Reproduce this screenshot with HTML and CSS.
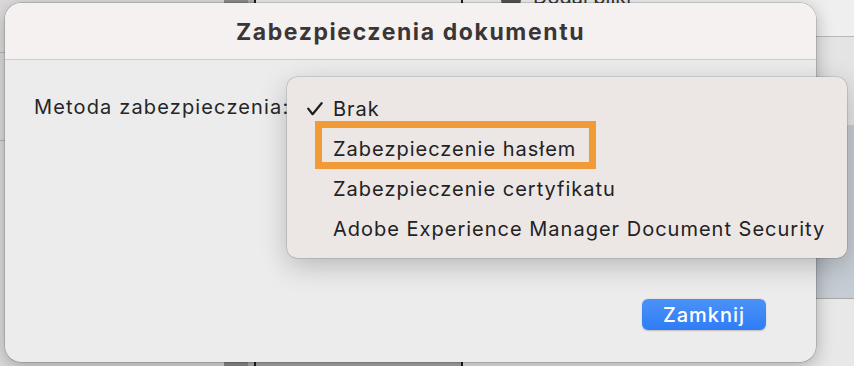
FILE: index.html
```html
<!DOCTYPE html>
<html lang="pl">
<head>
<meta charset="utf-8">
<title>Zabezpieczenia dokumentu</title>
<link rel="stylesheet" href="styles.css">
</head>
<body>
<div class="desk">
  <div class="col c-side"></div>
  <div class="col c-bar"></div>
  <div class="col c-gap"></div>
  <div class="col c-line"></div>
  <div class="col c-mid"></div>
  <div class="col c-line"></div>
  <div class="col c-right">
    <div class="r-top"><span class="add-ico"></span><span class="add-txt">Dodaj pliki</span></div>
    <div class="r-a"></div>
    <div class="r-b"></div>
    <div class="r-c"></div>
  </div>
</div>

<div class="dialog">
  <div class="titlebar">Zabezpieczenia dokumentu</div>
  <div class="body">
    <div class="row">
      <span class="label">Metoda zabezpieczenia:</span>
    </div>
    <div class="actions">
      <button class="btn">Zamknij</button>
    </div>
  </div>

  <div class="menu">
    <div class="item checked">
      <svg class="check" width="16" height="14" viewBox="0 0 16 14"><path d="M1.2 6.6 L5.6 12.2 L14.6 1.2" fill="none" stroke="#1e1e1e" stroke-width="2.2" stroke-linecap="round" stroke-linejoin="round"/></svg>
      <span>Brak</span>
    </div>
    <div class="item">Zabezpieczenie hasłem</div>
    <div class="item">Zabezpieczenie certyfikatu</div>
    <div class="item">Adobe Experience Manager Document Security</div>
    <div class="hl"></div>
  </div>
</div>
</body>
</html>
```
FILE: styles.css
```css
html, body {
  margin: 0;
  padding: 0;
  width: 854px;
  height: 366px;
  overflow: hidden;
  font-family: Inter, "Noto Sans", "Liberation Sans", sans-serif;
}

.desk {
  display: flex;
  height: 366px;
  background: #d8d8d8;
}
.col { height: 100%; }
.c-side {
  width: 224px;
  background:
    linear-gradient(#b9b9b9, #b9b9b9) 0 52px / 100% 1px no-repeat,
    linear-gradient(#b9b9b9, #b9b9b9) 0 140px / 100% 1px no-repeat,
    #dcdcdc;
}
.c-bar { width: 24px; background: #8d8d8d; }
.c-gap { width: 6px; background: #b2b2b2; }
.c-line { width: 2px; background: #1c1c1c; }
.c-mid { width: 205px; background: linear-gradient(#ececec 0 200px, #aaaaaa 200px); }
.c-right {
  flex: 1;
  display: flex;
  flex-direction: column;
  background: #e9e9e9;
}
.r-top {
  border-bottom: 1px solid #b8b8b8;
  background: #efefef;
  display: flex;
  align-items: flex-start;
  gap: 12px;
  padding-left: 38px;
  margin-top: -10px;
  height: 46px;
  font-size: 20px;
  color: #333;
}
.add-ico { width: 20px; height: 20px; border-radius: 50%; background: #555; }
.add-txt { line-height: 14px; }
.r-a { height: 88px; background: #e4e4e4; }
.r-b { height: 173px; background: #c5ccd3; border-bottom: 1px solid #a8a8a8; }
.r-c { flex: 1; background: #e8e8e8; }

.dialog {
  position: absolute;
  left: 5px;
  top: 3px;
  width: 811px;
  height: 359px;
  border-radius: 16px;
  background: #ececec;
  box-shadow: 0 0 0 0.5px rgba(0,0,0,0.25), 0 4px 18px rgba(0,0,0,0.28);
  display: flex;
  flex-direction: column;
}
.titlebar {
  height: 57px;
  flex: none;
  border-radius: 16px 16px 0 0;
  background: #f6f1f1;
  border-bottom: 1px solid #cfcbcb;
  display: flex;
  align-items: center;
  justify-content: center;
  font-size: 23px;
  font-weight: 700;
  letter-spacing: 1.6px;
  color: #3b3636;
  padding-top: 2px;
  box-sizing: border-box;
}
.body {
  flex: 1;
  display: flex;
  flex-direction: column;
  padding: 0 50px 0 29px;
}
.row {
  height: 90px;
  display: flex;
  align-items: center;
}
.label {
  font-size: 20px;
  letter-spacing: 1.15px;
  color: #262626;
  margin-top: 3px;
}
.actions {
  margin-top: auto;
  margin-bottom: 32px;
  display: flex;
  justify-content: flex-end;
}
.btn {
  width: 124px;
  height: 31px;
  border: none;
  border-radius: 6px;
  background: linear-gradient(#4b92f8, #2f7cf6);
  color: #fff;
  font-family: inherit;
  font-size: 20px;
  letter-spacing: 1px;
  font-weight: 500;
  padding: 0;
  box-shadow: 0 0.5px 1.5px rgba(0,0,0,0.2);
}

.menu {
  position: absolute;
  left: 282px;
  top: 74px;
  width: 560px;
  height: 181px;
  box-sizing: border-box;
  padding-top: 12px;
  border-radius: 10px;
  background: #ece7e5;
  box-shadow: 0 0 0 0.5px rgba(0,0,0,0.22), 0 8px 28px rgba(0,0,0,0.22);
}
.item {
  height: 40px;
  display: flex;
  align-items: center;
  padding-left: 46px;
  font-size: 20px;
  letter-spacing: 1px;
  color: #222;
  white-space: nowrap;
}
.item.checked { position: relative; }
.check {
  position: absolute;
  left: 20px;
  top: 13px;
}
.hl {
  position: absolute;
  left: 28px;
  top: 44px;
  width: 281px;
  height: 48px;
  box-sizing: border-box;
  border: 7px solid #f19a38;
}
```
